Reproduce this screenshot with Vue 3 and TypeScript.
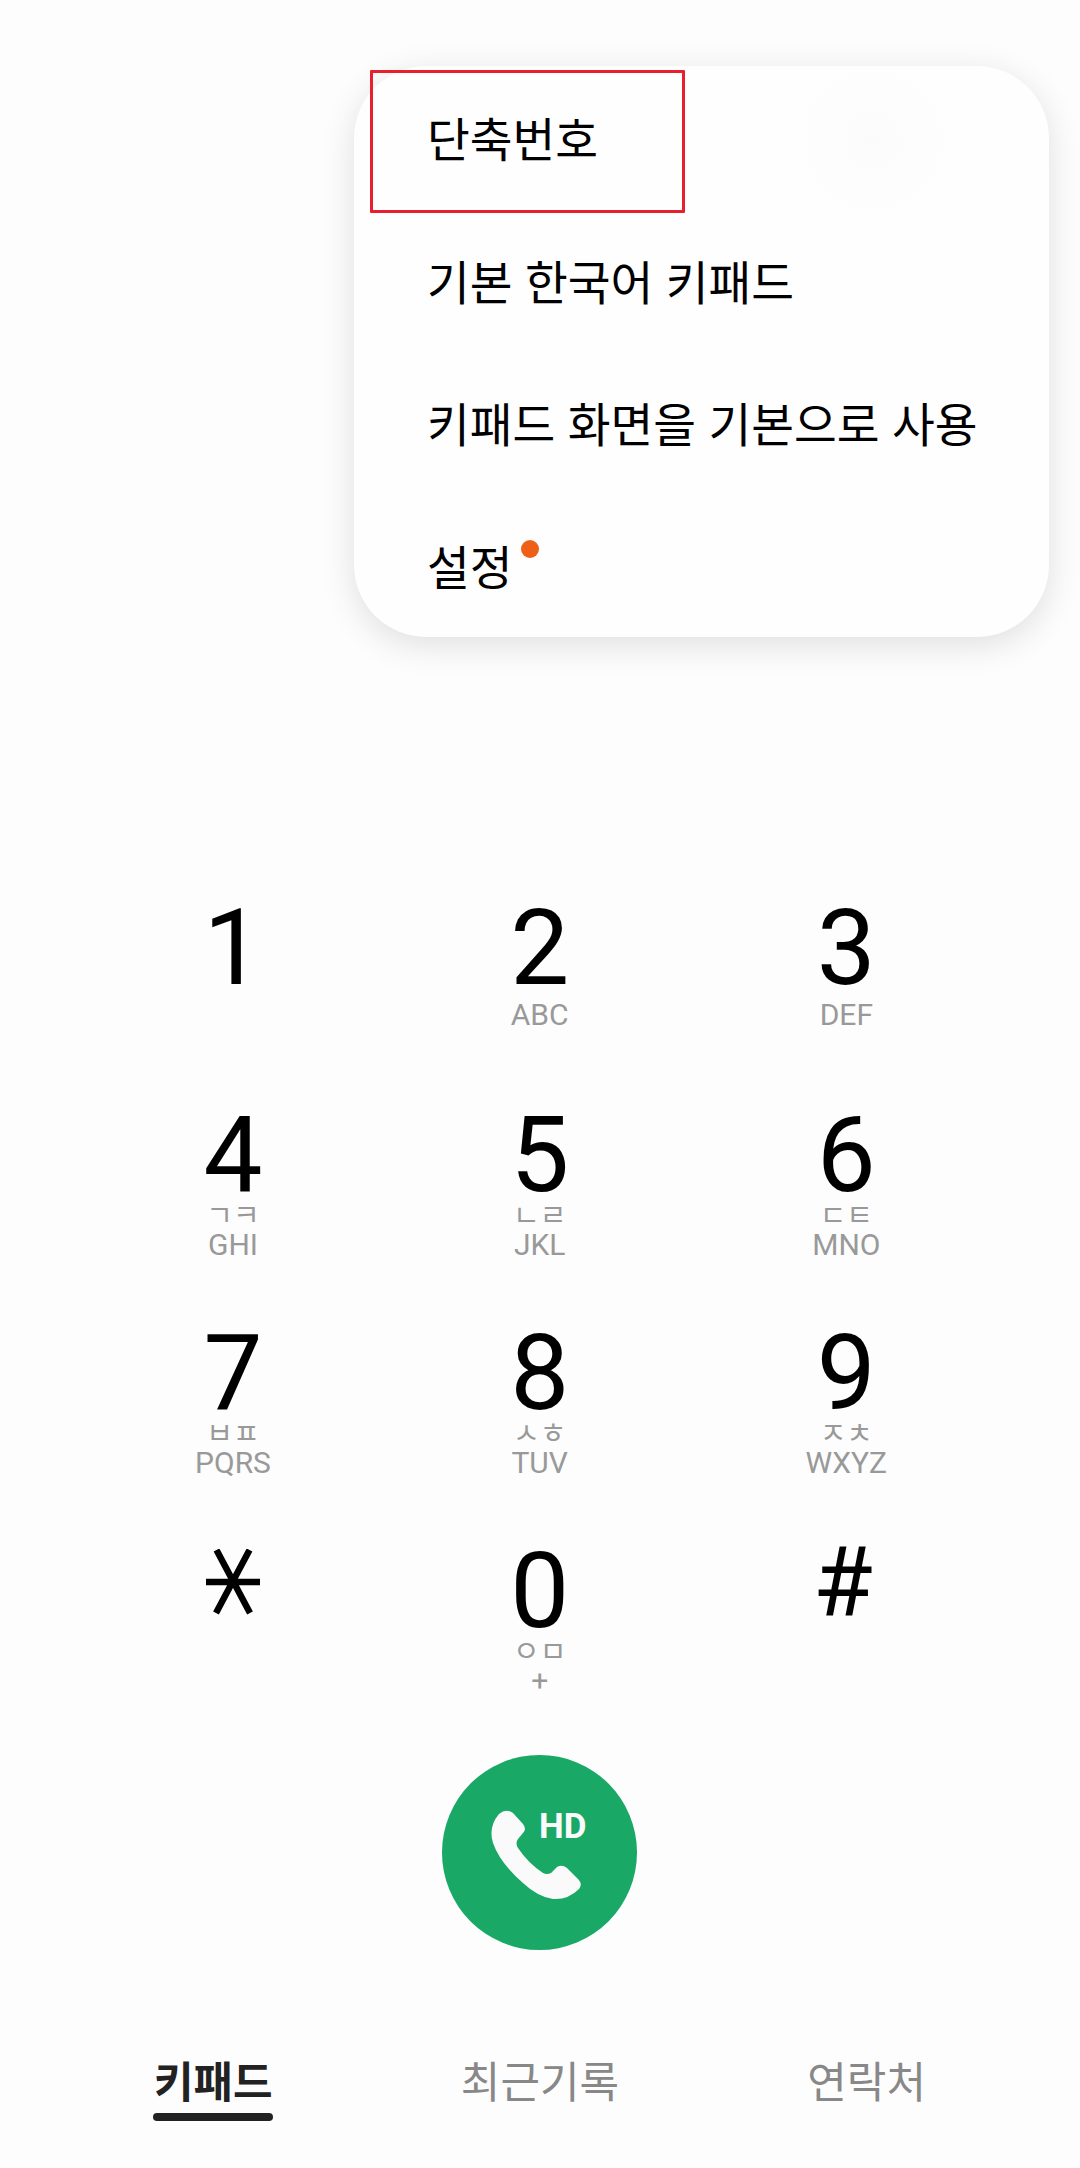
<script setup lang="ts">
interface DialKey { digit: string; jamo?: string; label?: string; symbol?: boolean }
const menu: string[] = ['단축번호', '기본 한국어 키패드', '키패드 화면을 기본으로 사용', '설정']
const keys: DialKey[] = [
  { digit: '1' },
  { digit: '2', label: 'ABC' },
  { digit: '3', label: 'DEF' },
  { digit: '4', jamo: 'ㄱㅋ', label: 'GHI' },
  { digit: '5', jamo: 'ㄴㄹ', label: 'JKL' },
  { digit: '6', jamo: 'ㄷㅌ', label: 'MNO' },
  { digit: '7', jamo: 'ㅂㅍ', label: 'PQRS' },
  { digit: '8', jamo: 'ㅅㅎ', label: 'TUV' },
  { digit: '9', jamo: 'ㅈㅊ', label: 'WXYZ' },
  { digit: '*', symbol: true },
  { digit: '0', jamo: 'ㅇㅁ', label: '+' },
  { digit: '#', symbol: true },
]
const tabs: string[] = ['키패드', '최근기록', '연락처']
</script>

<template>
  <div class="page">
    <div class="menu">
      <div v-for="(item, i) in menu" :key="item" class="menu-item">
        <span class="menu-text">{{ item }}<i v-if="i === 3" class="dot"></i></span>
      </div>
      <div class="highlight"></div>
    </div>

    <div class="pad">
      <div
        v-for="k in keys"
        :key="k.digit"
        class="key"
        :class="{ plain: k.digit === '1', sym: k.symbol }"
      >
        <svg v-if="k.digit === '*'" class="star" viewBox="0 0 54 66" aria-label="*">
          <path d="M0 33H54M10.500 1L44 64M43.500 1L10 64" fill="none" stroke="#000" stroke-width="6.500" />
        </svg>
        <span v-else class="digit" :class="{ hash: k.symbol }">{{ k.digit }}</span>
        <span v-if="k.jamo" class="jamo">{{ k.jamo }}</span>
        <span v-if="k.label" class="label">{{ k.label }}</span>
      </div>
    </div>

    <div class="call">
      <svg class="phone" viewBox="0 0 240 240">
        <path d="M79 84Q86 78 93 83L103 94Q107 99 103 103L98 109Q95 113 98 118Q108 133 123 143Q127 145 131 143L137 137Q142 134 147 138L158 149Q163 154 159 159Q148 170 133 169Q118 167 103 153Q80 133 73 113Q68 97 79 84Z" fill="#fafafa" />
      </svg>
      <span class="hd">HD</span>
    </div>

    <div class="tabs">
      <div v-for="(t, i) in tabs" :key="t" class="tab" :class="{ active: i === 0 }">
        <span class="tab-text">{{ t }}</span>
      </div>
    </div>
  </div>
</template>

<style>
html, body { margin: 0; background: #fdfdfd; }
</style>

<style scoped>
.page {
  width: 1080px;
  height: 2168px;
  background: #fdfdfd;
  overflow: hidden;
  display: flex;
  flex-direction: column;
  font-family: Roboto, "Noto Sans CJK KR", sans-serif;
}
.menu {
  position: relative;
  box-sizing: border-box;
  width: 695px;
  height: 571px;
  margin: 66px 0 0 354px;
  border-radius: 72px;
  background: radial-gradient(circle 80px at 519px 74px, #fbfbfb, rgba(251, 251, 251, 0)), #fefefe;
  box-shadow: 0 8px 34px rgba(0, 0, 0, 0.12);
  display: flex;
  flex-direction: column;
}
.menu-item {
  height: 142.500px;
  display: flex;
  align-items: center;
  padding-left: 73px;
}
.menu-text {
  position: relative;
  font-family: "Noto Sans CJK KR", sans-serif;
  font-size: 46.500px;
  word-spacing: 2px;
  line-height: 60px;
  color: #000;
}
.dot {
  position: absolute;
  left: 94px;
  top: 5px;
  width: 18px;
  height: 18px;
  border-radius: 50%;
  background: #ee6018;
}
.highlight {
  position: absolute;
  left: 16px;
  top: 4px;
  width: 315px;
  height: 143px;
  box-sizing: border-box;
  border: 3px solid #e8202e;
  border-radius: 1px;
}
.pad {
  margin-top: 221px;
  margin-left: 80px;
  width: 920px;
  display: grid;
  grid-template-columns: repeat(3, 1fr);
  grid-auto-rows: 218px;
}
.key {
  width: 306px;
  display: flex;
  flex-direction: column;
  align-items: center;
  justify-content: center;
}
.plain { padding-bottom: 36px; }
.sym { padding-bottom: 78px; }
.digit {
  font-size: 105px;
  line-height: 90px;
  height: 90px;
  color: #000;
  font-weight: 400;
}
.hash { font-size: 97px; margin-right: 7px; }
.star { width: 54px; height: 66px; padding: 12px 0; }
.jamo {
  font-family: "Noto Sans CJK KR", sans-serif;
  font-size: 29px;
  line-height: 22px;
  height: 22px;
  margin-top: 1px;
  margin-bottom: 6px;
  color: #999;
}
.label {
  font-size: 30px;
  line-height: 30px;
  height: 30px;
  margin-top: 6px;
  color: #999;
}
.jamo + .label { margin-top: 0; }
.call {
  position: relative;
  width: 195px;
  height: 195px;
  margin: 25px 0 0 442px;
  border-radius: 50%;
  background: #19a866;
}
.phone {
  position: absolute;
  left: -22px;
  top: -25px;
  width: 240px;
  height: 240px;
}
.hd {
  position: absolute;
  left: 97px;
  top: 52px;
  font-size: 35px;
  line-height: 40px;
  font-weight: 700;
  color: #fafafa;
}
.tabs {
  margin-top: 101px;
  padding: 0 50px;
  display: grid;
  grid-template-columns: repeat(3, 1fr);
}
.tab {
  display: flex;
  justify-content: center;
}
.tab-text {
  position: relative;
  font-family: "Noto Sans CJK KR", sans-serif;
  font-size: 43px;
  line-height: 56px;
  color: #888;
}
.active .tab-text { color: #222; font-weight: 700; }
.active .tab-text::after {
  content: "";
  position: absolute;
  left: -1px;
  right: 0;
  bottom: -14px;
  height: 8px;
  border-radius: 4px;
  background: #222;
}
</style>
